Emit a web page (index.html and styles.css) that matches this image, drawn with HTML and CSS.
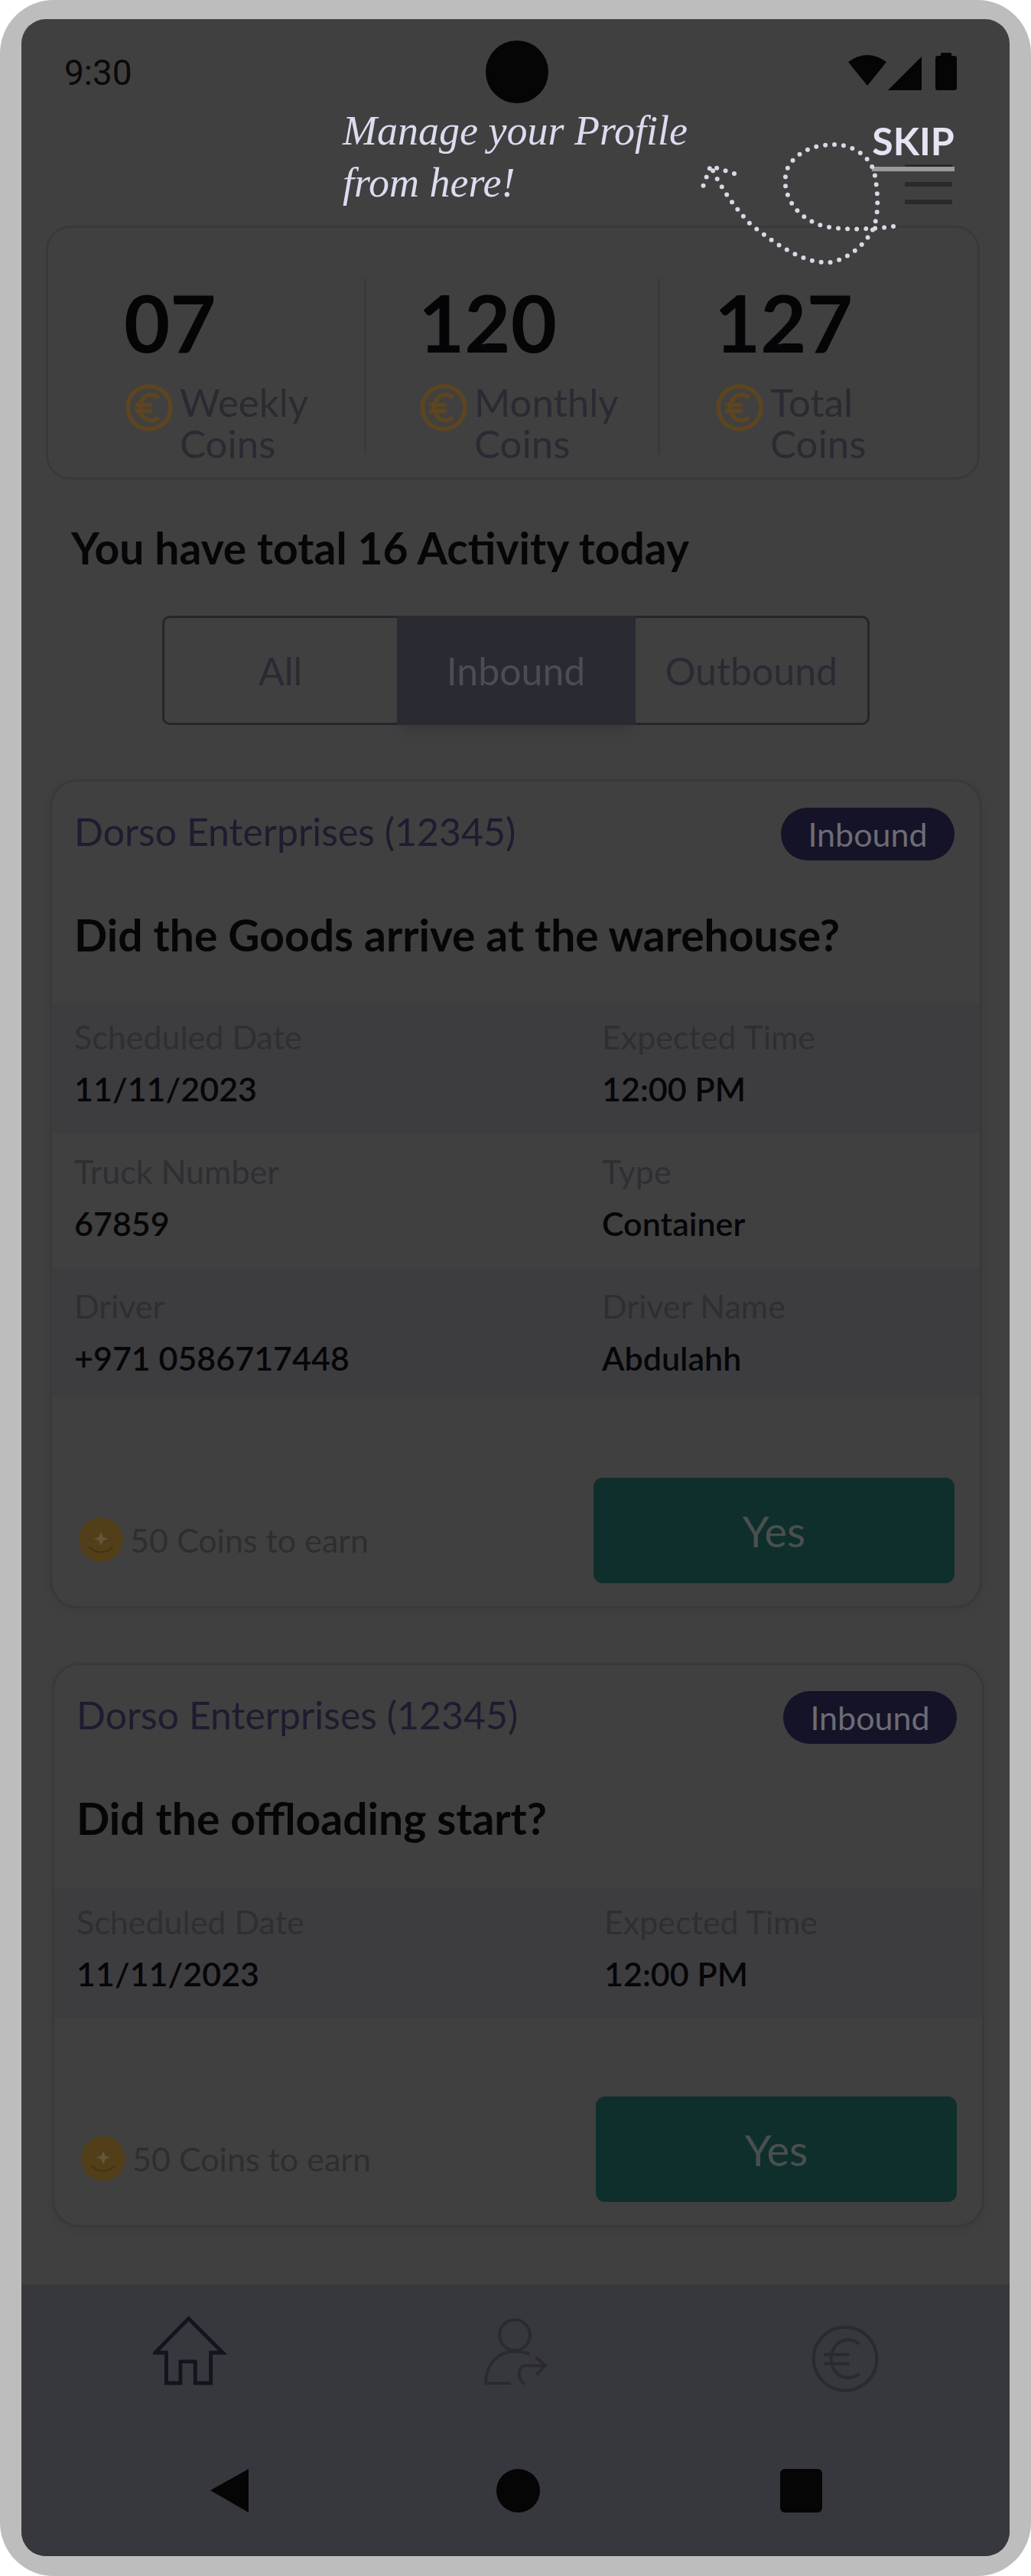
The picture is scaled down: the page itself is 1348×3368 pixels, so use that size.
FILE: index.html
```html
<!DOCTYPE html>
<html lang="en">
<head>
    <meta charset="UTF-8">
    <meta name="viewport" content="width=device-width, initial-scale=1.0">
    <title>Activity</title>
    <link rel="stylesheet" href="styles.css">
</head>
<body>

    <svg class="defs" width="0" height="0">
        <symbol id="euroCoin" viewBox="0 0 100 100">
            <circle cx="50" cy="50" r="45" fill="none"/>
            <path d="M70 29 C60 20 44 21 36 32 C28 43 28 57 36 68 C44 79 60 80 70 71" fill="none"/>
            <path d="M20 44 H56 M20 57 H56" fill="none"/>
        </symbol>
    </svg>

    <div class="frame">
        <div class="screen">

            <div class="status-bar">
                <span class="clock">9:30</span>
                <svg class="status-icons" viewBox="0 0 142 50" width="142" height="50">
                    <path d="M0 12 Q25 -6 50 12 L25 43 Z"/>
                    <path d="M52 49 L96 5 V49 Z"/>
                    <rect x="114" y="4" width="28" height="45" rx="3"/>
                    <rect x="121" y="0" width="14" height="6" rx="1"/>
                </svg>
            </div>
            <div class="camera"></div>

            <div class="top-bar">
                <div class="menu-icon">
                    <span></span>
                    <span></span>
                    <span></span>
                </div>
            </div>

            <div class="stats-card">
                <div class="stat">
                    <div class="stat-number">07</div>
                    <div class="stat-label">
                        <svg class="coin-small"><use href="#euroCoin"/></svg>
                        <span>Weekly<br>Coins</span>
                    </div>
                </div>
                <div class="stat">
                    <div class="stat-number">120</div>
                    <div class="stat-label">
                        <svg class="coin-small"><use href="#euroCoin"/></svg>
                        <span>Monthly<br>Coins</span>
                    </div>
                </div>
                <div class="stat">
                    <div class="stat-number">127</div>
                    <div class="stat-label">
                        <svg class="coin-small"><use href="#euroCoin"/></svg>
                        <span>Total<br>Coins</span>
                    </div>
                </div>
            </div>

            <h2 class="activity-title">You have total 16 Activity today</h2>

            <div class="tabs">
                <div class="tab">All</div>
                <div class="tab active">Inbound</div>
                <div class="tab">Outbound</div>
            </div>

            <div class="card card-first">
                <div class="card-head">
                    <span class="company">Dorso Enterprises (12345)</span>
                    <span class="badge">Inbound</span>
                </div>
                <h3 class="question">Did the Goods arrive at the warehouse?</h3>
                <div class="row shaded">
                    <div><p class="label">Scheduled Date</p><p class="value">11/11/2023</p></div>
                    <div><p class="label">Expected Time</p><p class="value">12:00 PM</p></div>
                </div>
                <div class="row">
                    <div><p class="label">Truck Number</p><p class="value">67859</p></div>
                    <div><p class="label">Type</p><p class="value">Container</p></div>
                </div>
                <div class="row shaded row-last">
                    <div><p class="label">Driver</p><p class="value">+971 0586717448</p></div>
                    <div><p class="label">Driver Name</p><p class="value">Abdulahh</p></div>
                </div>
                <div class="card-foot">
                    <div class="earn">
                        <svg class="coin-full" viewBox="0 0 60 60">
                            <circle cx="30" cy="30" r="30" fill="#523f19"/>
                            <path d="M30 20 L33 27 L40 29 L33 31 L30 38 L27 31 L20 29 L27 27 Z" fill="#635739"/>
                            <path d="M14 40 Q30 54 46 40" fill="none" stroke="#433312" stroke-width="2"/>
                        </svg>
                        <span>50 Coins to earn</span>
                    </div>
                    <div class="yes-btn">Yes</div>
                </div>
            </div>

            <div class="card card-second">
                <div class="card-head">
                    <span class="company">Dorso Enterprises (12345)</span>
                    <span class="badge">Inbound</span>
                </div>
                <h3 class="question">Did the offloading start?</h3>
                <div class="row shaded">
                    <div><p class="label">Scheduled Date</p><p class="value">11/11/2023</p></div>
                    <div><p class="label">Expected Time</p><p class="value">12:00 PM</p></div>
                </div>
                <div class="card-foot">
                    <div class="earn">
                        <svg class="coin-full" viewBox="0 0 60 60">
                            <circle cx="30" cy="30" r="30" fill="#523f19"/>
                            <path d="M30 20 L33 27 L40 29 L33 31 L30 38 L27 31 L20 29 L27 27 Z" fill="#635739"/>
                            <path d="M14 40 Q30 54 46 40" fill="none" stroke="#433312" stroke-width="2"/>
                        </svg>
                        <span>50 Coins to earn</span>
                    </div>
                    <div class="yes-btn">Yes</div>
                </div>
            </div>

            <div class="bottom-nav">
                <div class="nav-tabs">
                    <svg class="nav-icon home" viewBox="0 0 100 100">
                        <path d="M48 5 L3 51 H18 V92 H37 V63 H57 V92 H78 V51 H94 Z"/>
                    </svg>
                    <svg class="nav-icon" viewBox="0 0 90 100">
                        <circle cx="44" cy="28" r="20"/>
                        <path d="M63 53 C55 49 45 49 36 50 C18 54 6 70 6 91 H39"/>
                        <path d="M57 92 C47 85 47 68 59 68 H84 M72 57 L84 68 L72 80"/>
                    </svg>
                    <svg class="nav-icon nav-euro"><use href="#euroCoin"/></svg>
                </div>
                <div class="system-nav">
                    <svg class="sys-back" viewBox="0 0 60 57"><path d="M50 0 V57 L0 28 Z"/></svg>
                    <div class="sys-home"></div>
                    <div class="sys-recent"></div>
                </div>
            </div>

            <!-- tutorial overlay -->
            <div class="tip-text">Manage your Profile<br>from here!</div>
            <div class="skip">SKIP</div>
            <svg class="tip-arrow" viewBox="0 0 290 180" width="290" height="180">
                <path d="M268 116 C240 120 190 122 169 113 C135 100 118 65 131 37 C145 15 170 9 191 9 C215 9 240 25 244 50 C250 85 248 115 235 130 C220 150 195 166 175 163 C145 160 115 140 81 113 C60 90 45 70 29 37"/>
                <path d="M60 47 L29 37 L18 67"/>
            </svg>

        </div>
    </div>

</body>
</html>
```
FILE: styles.css
```css
body {
    font-family: "Lato", "Noto Sans", sans-serif;
    margin: 0;
    background-color: white;
}
p, h2, h3 {
    margin: 0;
}
.defs {
    position: absolute;
}
.frame {
    width: 1348px;
    height: 3368px;
    box-sizing: border-box;
    padding: 25px 28px 26px;
    background-color: #bdbdbd;
    border-radius: 70px;
}
.screen {
    position: relative;
    height: 3317px;
    display: flex;
    flex-direction: column;
    overflow: hidden;
    background-color: #404040;
    border-radius: 32px;
}

/* status bar */
.status-bar {
    height: 140px;
    flex-shrink: 0;
    display: flex;
    justify-content: space-between;
    padding: 0 69px 0 56px;
    box-sizing: border-box;
}
.clock {
    font-family: "Roboto", sans-serif;
    font-size: 46px;
    line-height: 70px;
    margin-top: 35px;
    color: #0a0a0a;
}
.status-icons {
    margin-top: 44px;
    fill: #050505;
}
.camera {
    position: absolute;
    left: 607px;
    top: 28px;
    width: 82px;
    height: 82px;
    border-radius: 50%;
    background-color: #050505;
}
.top-bar {
    height: 130px;
    flex-shrink: 0;
    display: flex;
    justify-content: flex-end;
    padding-right: 75px;
    box-sizing: border-box;
}
.menu-icon span {
    display: block;
    width: 62px;
    height: 6px;
    margin-top: 17px;
    background-color: #2a2a2a;
}
.menu-icon {
    padding-top: 33px;
}

/* coins */
.stats-card {
    height: 332px;
    flex-shrink: 0;
    box-sizing: border-box;
    margin: 0 39px 0 32px;
    border: 3px solid #393939;
    border-radius: 32px;
    display: grid;
    grid-template-columns: 416px 384px 1fr;
    padding-top: 66px;
}
.stat {
    height: 230px;
    padding-left: 68px;
    border-right: 3px solid #393939;
}
.stat:first-child {
    padding-left: 99px;
}
.stat:last-child {
    padding-left: 71px;
    border-right: none;
}
.stat-number {
    margin-top: -1px;
    font-size: 104px;
    font-weight: 700;
    line-height: 116px;
    color: #050508;
}
.stat-label {
    display: flex;
    gap: 9px;
    margin: 20px 0 0 2px;
    font-size: 51px;
    line-height: 54px;
    color: #2a2a33;
}
.coin-small {
    width: 62px;
    height: 62px;
    margin-top: 3px;
    stroke: #5c4520;
    stroke-width: 9;
    flex-shrink: 0;
}

.activity-title {
    margin: 55px 0 0 65px;
    font-size: 57px;
    line-height: 68px;
    font-weight: 700;
    color: #060609;
}

/* segmented control */
.tabs {
    margin: 55px 0 0 184px;
    width: 925px;
    height: 143px;
    flex-shrink: 0;
    box-sizing: border-box;
    display: flex;
    border: 3px solid #25252d;
    border-radius: 10px;
}
.tab {
    flex: 1;
    display: flex;
    align-items: center;
    justify-content: center;
    font-size: 50px;
    color: #2a2a34;
}
.tab.active {
    flex: none;
    width: 312px;
    margin: -3px 0;
    background-color: #2a2a32;
    color: #4c4c54;
    box-shadow: 0 14px 16px -6px rgba(0, 0, 0, 0.12);
}

/* activity cards */
.card {
    width: 1219px;
    flex-shrink: 0;
    box-sizing: border-box;
    display: flex;
    flex-direction: column;
    border: 3px solid #393939;
    border-radius: 36px;
    box-shadow: 0 4px 12px rgba(0, 0, 0, 0.06);
}
.card-first {
    height: 1084px;
    margin: 71px 0 0 37px;
}
.card-second {
    height: 738px;
    margin: 71px 0 0 40px;
}
.card-second .question {
    margin-bottom: 57px;
}
.card-head {
    display: flex;
    justify-content: space-between;
    align-items: center;
    margin-top: 34px;
    padding: 0 33px 0 29px;
}
.company {
    margin-bottom: 8px;
    font-size: 50px;
    color: #1d1c30;
}
.badge {
    width: 227px;
    height: 69px;
    display: flex;
    align-items: center;
    justify-content: center;
    font-size: 43px;
    border-radius: 35px;
    background-color: #151328;
    color: #6c6c74;
}
.question {
    margin: 62px 0 55px 29px;
    font-size: 57px;
    line-height: 70px;
    font-weight: 700;
    color: #060609;
}
.row {
    display: grid;
    grid-template-columns: 690px 1fr;
    padding: 24px 29px 32px;
}
.question + .row {
    padding-top: 18px;
}
.row.row-last {
    padding-bottom: 24px;
}
.row.shaded {
    background-color: #3d3d40;
}
.card-foot {
    margin-top: auto;
    display: flex;
    justify-content: space-between;
    align-items: flex-end;
    padding: 0 33px 30px 35px;
}
.label {
    font-size: 43px;
    line-height: 52px;
    color: #2e2e33;
}
.value {
    margin-top: 16px;
    font-size: 43px;
    line-height: 52px;
    font-weight: 600;
    color: #060609;
}
.earn {
    display: flex;
    align-items: center;
    gap: 9px;
    margin-bottom: 28px;
    font-size: 43px;
    color: #2e2e2e;
}
.coin-full {
    width: 58px;
    height: 58px;
}
.yes-btn {
    width: 472px;
    height: 138px;
    display: flex;
    align-items: center;
    justify-content: center;
    border-radius: 12px;
    font-size: 56px;
    background-color: #0f2f2c;
    color: #4a4f4e;
}

/* bottom nav */
.bottom-nav {
    margin-top: auto;
    height: 355px;
    flex-shrink: 0;
    background-color: #37383d;
}
.nav-tabs {
    display: grid;
    grid-template-columns: repeat(3, 1fr);
    justify-items: center;
    padding-top: 38px;
    height: 241px;
    box-sizing: border-box;
}
.nav-icon {
    width: 90px;
    height: 100px;
    fill: none;
    stroke: #2a2a30;
    stroke-width: 4;
}
.nav-icon.home {
    width: 97px;
    margin-left: 10px;
    stroke: #14141f;
    stroke-width: 5;
}
.nav-euro {
    width: 92px;
    height: 92px;
    margin-top: 13px;
    stroke-width: 4.5;
}
.system-nav {
    display: flex;
    justify-content: space-between;
    padding: 0 245px 0 247px;
}
.sys-back {
    width: 60px;
    height: 57px;
    fill: #050505;
}
.sys-home {
    width: 57px;
    height: 57px;
    border-radius: 50%;
    background-color: #050505;
}
.sys-recent {
    width: 55px;
    height: 57px;
    border-radius: 6px;
    background-color: #050505;
}

/* tutorial overlay */
.tip-text {
    position: absolute;
    left: 420px;
    top: 112px;
    font-family: "Liberation Serif", serif;
    font-style: italic;
    font-size: 54px;
    line-height: 68px;
    color: #dcdcf0;
}
.skip {
    position: absolute;
    left: 1112px;
    top: 130px;
    width: 108px;
    height: 63px;
    border-bottom: 6px solid #9a9a9e;
    box-sizing: content-box;
    font-size: 50px;
    line-height: 58px;
    font-weight: 700;
    text-align: center;
    color: #e4e4f2;
}
.tip-arrow {
    position: absolute;
    left: 872px;
    top: 155px;
    fill: none;
    stroke: #d8d8e6;
    stroke-width: 6;
    stroke-linecap: round;
    stroke-dasharray: 0 12;
}
```
